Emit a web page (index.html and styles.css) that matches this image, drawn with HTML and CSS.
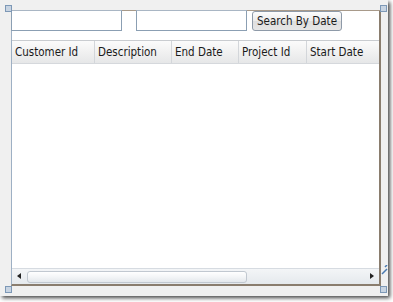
FILE: index.html
```html
<!DOCTYPE html>
<html lang="en">
<head>
    <meta charset="UTF-8">
    <title>Search By Date</title>
    <link rel="stylesheet" href="styles.css">
</head>
<body>
    <div class="canvas">
        <span class="handle handle-tl"></span>
        <span class="handle handle-tr"></span>
        <span class="handle handle-bl"></span>
        <span class="handle handle-br"></span>
        <span class="resize-mark">
            <svg width="7" height="10" viewBox="0 0 7 10"><path d="M1 9 L6 4 M4 2 L6 0" stroke="#4a7ab0" stroke-width="1.5" fill="none"/></svg>
        </span>

        <div class="frame">
            <div class="toolbar">
                <input type="text" class="box box-first">
                <input type="text" class="box box-second">
                <button type="button" class="search-btn">Search By Date</button>
            </div>

            <div class="grid">
                <div class="grid-header">
                    <div class="col col-customer">Customer Id</div>
                    <div class="col col-desc">Description</div>
                    <div class="col col-end">End Date</div>
                    <div class="col col-project">Project Id</div>
                    <div class="col col-start">Start Date</div>
                </div>
                <div class="grid-body"></div>
                <div class="hscroll">
                    <span class="arrow arrow-left"></span>
                    <span class="thumb"></span>
                    <span class="track"></span>
                    <span class="arrow arrow-right"></span>
                </div>
            </div>
        </div>
    </div>
</body>
</html>
```

FILE: styles.css
```css
body {
    margin: 0;
    padding: 0;
    width: 393px;
    height: 302px;
    overflow: hidden;
    background: #ffffff;
    font-family: "DejaVu Sans Condensed", "DejaVu Sans", sans-serif;
}

.canvas {
    position: relative;
    width: 388px;
    height: 296px;
    background: #f0f0f0;
    box-shadow: 2px 2px 4px #444;
    padding: 10px 0 0 11px;
    box-sizing: border-box;
}

.handle {
    position: absolute;
    width: 5px;
    height: 5px;
    border: 1px solid #7d98b6;
    background: #c8d4e2;
}

.handle-tl { left: 5px; top: 5px; }
.handle-tr { left: 380px; top: 5px; }
.handle-bl { left: 5px; top: 286px; }
.handle-br { left: 380px; top: 286px; }

.resize-mark {
    position: absolute;
    left: 381px;
    top: 265px;
    line-height: 0;
}

.frame {
    width: 367px;
    height: 273px;
    background: #ffffff;
    border-left: 1px solid #9eb0c4;
    border-top: 1px solid #a89a8a;
    border-right: 2px solid #8a7d6e;
    border-bottom: 2px solid #8a7d6e;
    display: flex;
    flex-direction: column;
}

.toolbar {
    display: flex;
    align-items: flex-start;
    height: 30px;
    margin-top: -1px;
    margin-left: -1px;
}

.box {
    height: 21px;
    box-sizing: border-box;
    border: 1px solid #8b9fb3;
    border-top-color: #a9b6c4;
    background: #fff;
    padding: 0;
    margin: 0;
}

.box-first { width: 111px; }
.box-second { width: 111px; margin-left: 14px; }

.search-btn {
    margin: 1px 0 0 5px;
    height: 20px;
    width: 90px;
    padding: 0;
    border: 1px solid #8e9aa8;
    border-radius: 3px;
    background: linear-gradient(#fdfdfd, #ebebeb 50%, #dedede 51%, #e6e6e6);
    font-family: inherit;
    font-size: 11.5px;
    color: #1a1a1a;
}

.grid {
    flex: 1;
    display: flex;
    flex-direction: column;
    border-top: 1px solid #c9ccd0;
}

.grid-header {
    display: flex;
    height: 22px;
    background: linear-gradient(#fbfbfb, #f1f1f1 50%, #e6e7e8);
    border-bottom: 1px solid #d5d8dc;
}

.col {
    box-sizing: border-box;
    padding-left: 3px;
    font-size: 11.5px;
    line-height: 22px;
    color: #1a1a1a;
    border-right: 1px solid #d3d6da;
    white-space: nowrap;
}

.col-customer { width: 83px; }
.col-desc { width: 77px; }
.col-end { width: 67px; }
.col-project { width: 68px; }
.col-start { width: 72px; border-right: none; }

.grid-body {
    flex: 1;
}

.hscroll {
    display: flex;
    align-items: center;
    height: 15px;
    border-top: 1px solid #d6dbe1;
    background: linear-gradient(#f3f5f7, #e5e9ed);
}

.arrow {
    width: 14px;
    height: 15px;
    position: relative;
}

.arrow-left::after,
.arrow-right::after {
    content: "";
    position: absolute;
    top: 4px;
    border-top: 3px solid transparent;
    border-bottom: 3px solid transparent;
}

.arrow-left::after {
    left: 5px;
    border-right: 4px solid #222;
}

.arrow-right::after {
    left: 5px;
    border-left: 4px solid #222;
}

.thumb {
    width: 220px;
    height: 12px;
    margin-left: 1px;
    border: 1px solid #c1c8d0;
    border-radius: 3px;
    background: linear-gradient(#ffffff, #f3f5f7 50%, #e4e8ec);
    box-sizing: border-box;
}

.track {
    flex: 1;
}
```
